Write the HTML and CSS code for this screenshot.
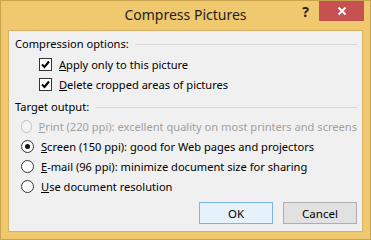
FILE: index.html
```html
<!DOCTYPE html>
<html>
<head>
  <link rel="stylesheet" href="styles.css">
</head>
<body>
  <div class="window">
    <div class="titlebar">
      <span></span>
      <span class="title">Compress Pictures</span>
      <div class="controls">
        <span class="help">?</span>
        <span class="close">
          <svg width="10" height="10" viewBox="0 0 10 10"><path d="M1.5 1.5 L8.5 8.5 M8.5 1.5 L1.5 8.5" stroke="#fff" stroke-width="2"/></svg>
        </span>
      </div>
    </div>

    <div class="client">
      <div class="group-label"><span>Compression options:</span><i class="rule"></i></div>
      <div class="checks">
        <label class="row">
          <span class="check"><svg width="11" height="11" viewBox="0 0 11 11"><path d="M2 5.5 L4.5 8 L9 2.5" fill="none" stroke="#000" stroke-width="2"/></svg></span>
          <span><u>A</u>pply only to this picture</span>
        </label>
        <label class="row">
          <span class="check"><svg width="11" height="11" viewBox="0 0 11 11"><path d="M2 5.5 L4.5 8 L9 2.5" fill="none" stroke="#000" stroke-width="2"/></svg></span>
          <span><u>D</u>elete cropped areas of pictures</span>
        </label>
      </div>

      <div class="group-label second"><span>Target output:</span><i class="rule"></i></div>
      <div class="radios">
        <label class="row disabled"><span class="radio"></span><span><u>P</u>rint (220 ppi): excellent quality on most printers and screens</span></label>
        <label class="row"><span class="radio on"></span><span><u>S</u>creen (150 ppi): good for Web pages and projectors</span></label>
        <label class="row"><span class="radio"></span><span><u>E</u>-mail (96 ppi): minimize document size for sharing</span></label>
        <label class="row"><span class="radio"></span><span><u>U</u>se document resolution</span></label>
      </div>

      <div class="buttons">
        <button class="btn default">OK</button>
        <button class="btn">Cancel</button>
      </div>
    </div>
  </div>
</body>
</html>
```

FILE: styles.css
```css
body {
  margin: 0;
  font-family: "Noto Sans", "Open Sans", sans-serif;
  font-size: 11.1px;
  color: #000;
}

.window {
  width: 371px;
  height: 240px;
  box-sizing: border-box;
  background: #f0c86e;
  border: 1px solid #c9a34e;
  display: flex;
  flex-direction: column;
}

.titlebar {
  height: 29px;
  display: grid;
  grid-template-columns: 1fr auto 1fr;
}

.title {
  font-size: 14px;
  line-height: 28px;
  color: #1e1e1e;
}

.controls {
  display: flex;
  justify-content: flex-end;
  align-items: flex-start;
}

.help {
  font-weight: 700;
  font-size: 14px;
  line-height: 20px;
  color: #222;
  margin-right: 10px;
  margin-top: 1px;
}

.close {
  width: 45px;
  height: 20px;
  background: #c75050;
  display: flex;
  justify-content: center;
  align-items: center;
  margin-right: 6px;
}

.client {
  margin: 0 7px 7px 7px;
  flex: 1;
  background: #f0f0f0;
  border: 1px solid #d6b165;
  padding: 5px 5px 0 6px;
  display: flex;
  flex-direction: column;
  white-space: nowrap;
}

.group-label {
  display: flex;
  align-items: center;
  height: 16px;
  line-height: 16px;
}

.group-label.second {
  margin-top: 5px;
}

.rule {
  flex: 1;
  height: 1px;
  background: #d9d9d9;
  margin-left: 6px;
}

.checks {
  margin-top: 2px;
  padding-left: 24px;
}

.radios {
  margin-top: 1px;
  padding-left: 6px;
}

.row {
  display: flex;
  align-items: center;
  height: 20px;
  gap: 7px;
}

.check {
  width: 11px;
  height: 11px;
  border: 1px solid #333;
  background: #fff;
  display: flex;
}

.radio {
  width: 11px;
  height: 11px;
  border: 1px solid #333;
  border-radius: 50%;
  background: #fff;
  display: flex;
  justify-content: center;
  align-items: center;
}

.radio.on::after {
  content: "";
  width: 5px;
  height: 5px;
  border-radius: 50%;
  background: #111;
}

.disabled {
  color: #a0a0a0;
}

.disabled .radio {
  border-color: #c4c4c4;
  background: #f4f4f4;
}

.buttons {
  display: flex;
  justify-content: flex-end;
  gap: 10px;
  margin-top: 6px;
}

.btn {
  width: 74px;
  height: 22px;
  font-family: inherit;
  font-size: 11.5px;
  color: #000;
  background: #e1e1e1;
  border: 1px solid #adadad;
  padding: 0;
}

.btn.default {
  background: #e5f1fb;
  border-color: #7eb4ea;
}
```
